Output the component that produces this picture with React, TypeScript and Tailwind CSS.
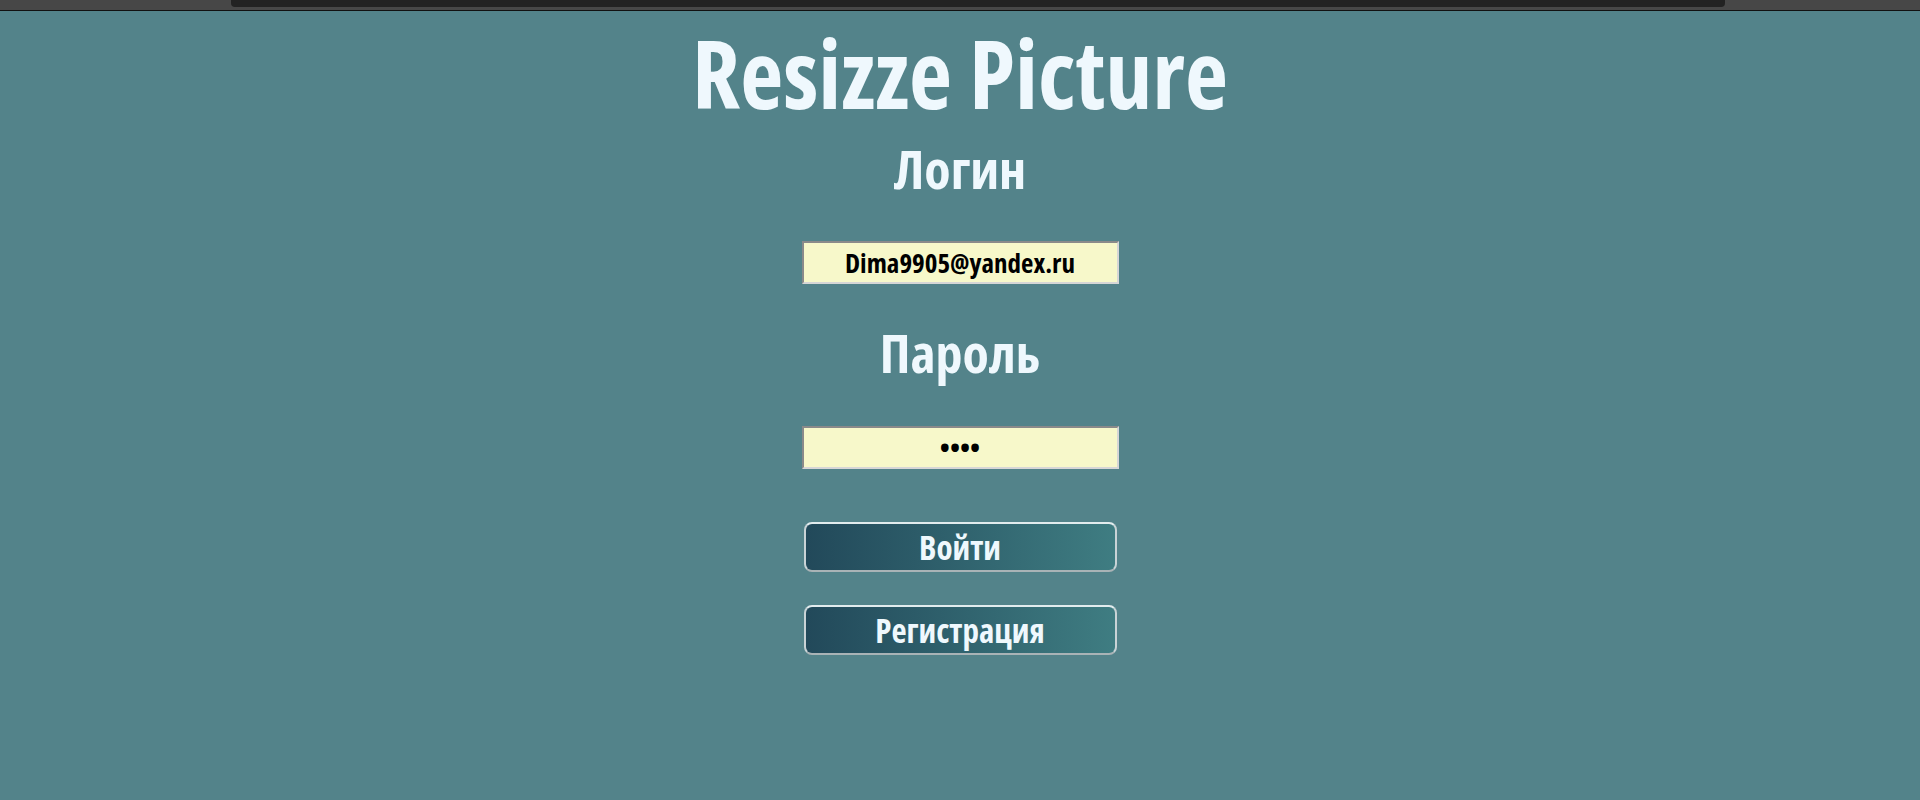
const App = () => {
  return (
    <div className="min-h-[800px] w-full bg-[#53838a] font-['Open_Sans',sans-serif] font-bold font-stretch-condensed text-[#eff8fd]">
      <div className="h-[11px] bg-[#474747] border-b border-[#111]">
        <div className="ml-[231px] w-[1494px] h-[7px] bg-[#222] rounded-b-[4px]" />
      </div>
      <div className="flex flex-col items-center">
        <h1 className="text-[94px] leading-[94px] mt-[15px]">Resizze Picture</h1>
        <h2 className="text-[54px] leading-[54px] mt-[21px]">Логин</h2>
        <input
          className="mt-[46px] w-[317px] h-[43px] bg-[#f7f8ca] border-2 border-t-[#8a8a8a] border-l-[#8a8a8a] border-b-[#d6d6d6] border-r-[#d6d6d6] text-center text-[27px] text-black outline-none"
          defaultValue="Dima9905@yandex.ru"
        />
        <h2 className="text-[54px] leading-[54px] mt-[41px]">Пароль</h2>
        <input
          type="password"
          className="mt-[47px] w-[317px] h-[43px] bg-[#f7f8ca] border-2 border-t-[#8a8a8a] border-l-[#8a8a8a] border-b-[#d6d6d6] border-r-[#d6d6d6] text-center text-[26px] text-black outline-none"
          defaultValue="1234"
        />
        <button className="mt-[53px] w-[313px] h-[50px] rounded-[8px] border-2 border-t-[#e2ecee] border-x-[#c9d3d6] border-b-[#a9b3b6] bg-linear-to-r from-[#22495a] to-[#3f7d82] text-[33px] leading-none text-[#eff8fd]">
          Войти
        </button>
        <button className="mt-[33px] w-[313px] h-[50px] rounded-[8px] border-2 border-t-[#e2ecee] border-x-[#c9d3d6] border-b-[#a9b3b6] bg-linear-to-r from-[#22495a] to-[#3f7d82] text-[33px] leading-none text-[#eff8fd]">
          Регистрация
        </button>
      </div>
    </div>
  );
};

export default App;
